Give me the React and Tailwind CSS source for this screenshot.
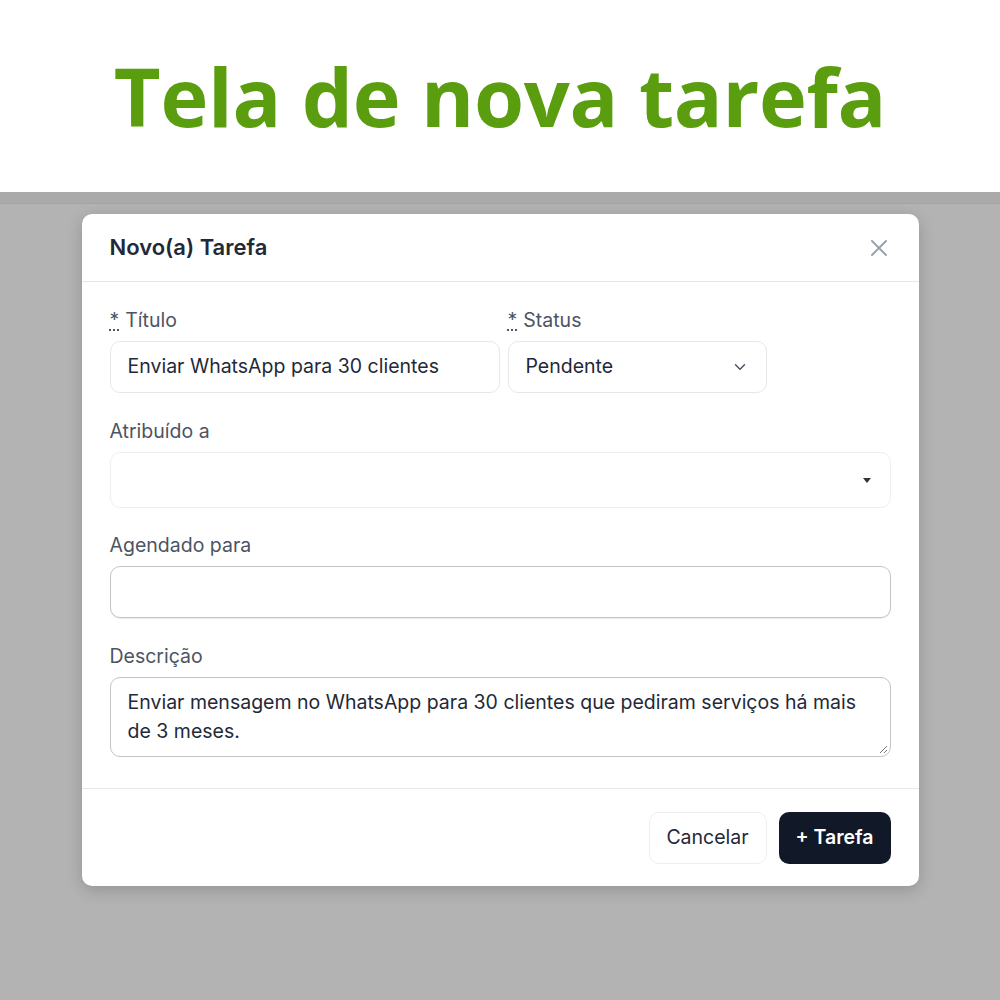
import React from "react";

function Label({ required, children }) {
  return (
    <div className="text-[19.5px] leading-[24px] text-[#4b5563] mb-[9px]">
      {required && (
        <span className="underline decoration-dotted underline-offset-[3px] mr-[6px]">*</span>
      )}
      {children}
    </div>
  );
}

export default function App() {
  return (
    <div className="w-[1000px] h-[1000px] flex flex-col bg-[#b3b3b3] font-['Inter',sans-serif]">
      <div className="h-[192px] bg-white flex items-center justify-center">
        <h1 className="font-['Open_Sans',sans-serif] font-bold text-[#5a9e0f] text-[81px] leading-none tracking-[-0.3px] -mt-[2px]">
          Tela de nova tarefa
        </h1>
      </div>
      <div className="h-[12px] bg-[#aaaaaa] border-b border-[#a3a3a3]" />

      <div className="flex justify-center pt-[10px]">
        <div className="w-[837px] bg-white rounded-[10px] shadow-[0_4px_16px_rgba(0,0,0,0.18)]">
          {/* Header */}
          <div className="h-[68px] flex items-center justify-between pl-[28px] pr-[28px] border-b border-[#e5e7eb]">
            <h2 className="text-[22px] font-semibold text-[#1f2937]">Novo(a) Tarefa</h2>
            <svg className="w-[24px] h-[24px] text-[#9ca3af]" fill="none" stroke="currentColor" viewBox="0 0 24 24">
              <path strokeLinecap="round" strokeWidth={2} d="M5 5l14 14M19 5L5 19" />
            </svg>
          </div>

          {/* Body */}
          <div className="px-[28px] pt-[26px] pb-[31px] flex flex-col">
            <div className="flex gap-[8px]">
              <div className="w-[390px]">
                <Label required>Título</Label>
                <div className="h-[52px] rounded-[10px] border border-[#e5e7eb] flex items-center px-[17px] text-[19.5px] text-[#1f2937]">
                  Enviar WhatsApp para 30 clientes
                </div>
              </div>
              <div className="w-[259px]">
                <Label required>Status</Label>
                <div className="h-[52px] rounded-[10px] border border-[#e5e7eb] flex items-center justify-between pl-[17px] pr-[17px] text-[19.5px] text-[#1f2937]">
                  <span>Pendente</span>
                  <svg className="w-[18px] h-[18px] text-[#4b5563]" fill="none" stroke="currentColor" viewBox="0 0 24 24">
                    <path strokeLinecap="round" strokeLinejoin="round" strokeWidth={2} d="M6 9l6 6 6-6" />
                  </svg>
                </div>
              </div>
            </div>

            <div className="mt-[26px]">
              <Label>Atribuído a</Label>
              <div className="h-[56px] rounded-[10px] border border-[#eeeff1] flex items-center justify-end pr-[19px]">
                <div className="w-0 h-0 border-l-[4px] border-r-[4px] border-t-[5px] border-l-transparent border-r-transparent border-t-[#333]" />
              </div>
            </div>

            <div className="mt-[25px]">
              <Label>Agendado para</Label>
              <div className="h-[52px] rounded-[10px] border border-[#c4c4c4] shadow-[0_1px_1px_rgba(0,0,0,0.08)]" />
            </div>

            <div className="mt-[26px]">
              <Label>Descrição</Label>
              <div className="relative h-[80px] rounded-[10px] border border-[#c4c4c4] px-[17px] pt-[10px] text-[19.5px] leading-[29px] text-[#1f2937]">
                Enviar mensagem no WhatsApp para 30 clientes que pediram serviços há mais de 3 meses.
                <svg className="absolute right-[2px] bottom-[2px] w-[10px] h-[10px] text-[#777]" viewBox="0 0 10 10" fill="none" stroke="currentColor">
                  <path d="M9 2L2 9M9 6L6 9" strokeWidth="1" />
                </svg>
              </div>
            </div>
          </div>

          {/* Footer */}
          <div className="border-t border-[#e5e7eb] h-[98px] flex items-center justify-end gap-[12px] px-[28px]">
            <button className="h-[52px] w-[118px] rounded-[10px] border border-[#eceef0] bg-white text-[19.5px] text-[#1f2937]">
              Cancelar
            </button>
            <button className="h-[52px] w-[112px] rounded-[10px] bg-[#111827] text-white text-[19.5px] font-semibold">
              + Tarefa
            </button>
          </div>
        </div>
      </div>
    </div>
  );
}
